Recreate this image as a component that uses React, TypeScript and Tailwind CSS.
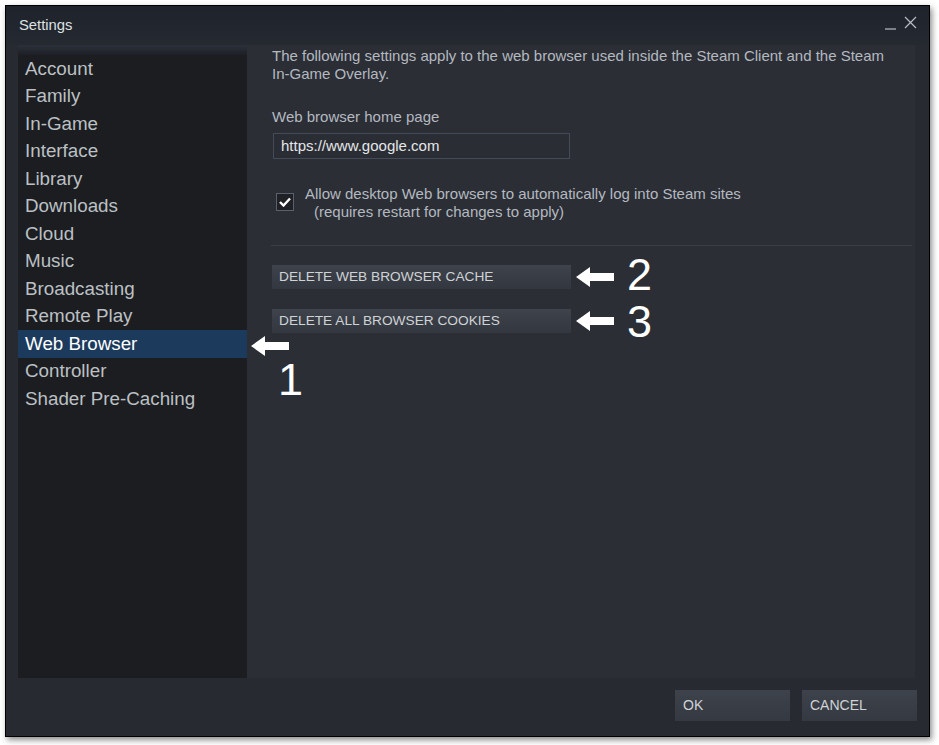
import React from 'react';

const NAV = [
  'Account', 'Family', 'In-Game', 'Interface', 'Library', 'Downloads', 'Cloud',
  'Music', 'Broadcasting', 'Remote Play', 'Web Browser', 'Controller', 'Shader Pre-Caching',
];

const Arrow: React.FC<{ className: string }> = ({ className }) => (
  <svg className={className} width="38" height="20" viewBox="0 0 38 20">
    <polygon points="0,10 14,0 14,6 38,6 38,14 14,14 14,20" fill="white" />
  </svg>
);

const App: React.FC = () => {
  return (
    <div className="w-[939px] h-[745px] bg-white pt-[5px] pl-[5px] relative" style={{ fontFamily: '"Liberation Sans", Arial, sans-serif' }}>
      {/* Window */}
      <div className="w-[925px] h-[732px] border border-black bg-[#272a31] shadow-[2px_3px_6px_rgba(0,0,0,0.45)] flex flex-col">
        {/* Title bar */}
        <div className="h-[39px] shrink-0 flex items-start justify-between bg-gradient-to-b from-[#1e232c] to-[#252930] pl-[13px] pr-[12px]">
          <span className="text-[14.8px] leading-[18px] text-[#dfe1e3] mt-[10px]">Settings</span>
          <div className="flex items-start gap-[8px] mt-[10px]">
            <svg width="11" height="14" viewBox="0 0 11 14"><line x1="0" y1="13" x2="11" y2="13" stroke="#b9bec4" strokeWidth="1.2" /></svg>
            <svg width="13" height="13" viewBox="0 0 13 13"><path d="M1 1 L12 12 M12 1 L1 12" stroke="#b9bec4" strokeWidth="1.2" /></svg>
          </div>
        </div>

        {/* Body */}
        <div className="flex h-[633px] shrink-0 pl-[12px] pr-[14px]">
          {/* Sidebar */}
          <div className="w-[229px] shrink-0 bg-[#1b1d21] flex flex-col">
            <div className="h-[10px] bg-gradient-to-b from-[#2c3038] to-[#1d2026]" />
            {NAV.map((item) => {
              const active = item === 'Web Browser';
              return (
                <div
                  key={item}
                  className={`h-[27.5px] flex items-center pl-[7px] text-[18.8px] ${active ? 'bg-[#1c3a5c] text-white' : 'text-[#bcc0c4]'}`}
                >
                  {item}
                </div>
              );
            })}
          </div>

          {/* Content */}
          <div className="flex-1 bg-[#2b2e35] pl-[25px] pr-[3px] pt-[2px] text-[15px] leading-[18px] text-[#b4b9c0]">
            <p className="w-[630px]">
              The following settings apply to the web browser used inside the Steam Client and the Steam In-Game Overlay.
            </p>
            <p className="mt-[25px]">Web browser home page</p>
            <div className="mt-[7px] ml-[1px] w-[297px] h-[26px] border border-[#444b58] bg-[#2a2d34] flex items-center pl-[7px] text-[#e4e6e8]">
              https://www.google.com
            </div>
            <div className="mt-[26px] flex items-start">
              <div className="mt-[8px] ml-[4px] w-[18px] h-[18px] border border-[#5b616c] bg-[#1f2126] flex items-center justify-center">
                <svg width="12" height="10" viewBox="0 0 12 10"><path d="M1 5 L4.5 8.5 L11 1.5" stroke="white" strokeWidth="2.4" fill="none" /></svg>
              </div>
              <div className="ml-[11px]">
                <p>Allow desktop Web browsers to automatically log into Steam sites</p>
                <p className="pl-[9px]">(requires restart for changes to apply)</p>
              </div>
            </div>
            <div className="mt-[24px] -ml-[1px] h-px bg-[#3a3e46]" />
            <div className="mt-[19px] flex flex-col gap-[20px]">
              <div className="w-[299px] h-[24px] bg-gradient-to-b from-[#3e434c] to-[#33373f] flex items-center pl-[7px] text-[13.7px] text-[#d0d3d6]">
                DELETE WEB BROWSER CACHE
              </div>
              <div className="w-[299px] h-[24px] bg-gradient-to-b from-[#3e434c] to-[#33373f] flex items-center pl-[7px] text-[13.7px] text-[#d0d3d6]">
                DELETE ALL BROWSER COOKIES
              </div>
            </div>
          </div>
        </div>

        {/* Footer */}
        <div className="flex-1 flex justify-end items-start gap-[12px] pt-[12px] pr-[12px]">
          <div className="w-[115px] h-[31px] bg-gradient-to-b from-[#3d424b] to-[#353941] flex items-center pl-[8px] text-[14px] text-[#d0d3d6]">OK</div>
          <div className="w-[115px] h-[31px] bg-gradient-to-b from-[#3d424b] to-[#353941] flex items-center pl-[8px] text-[14px] text-[#d0d3d6]">CANCEL</div>
        </div>
      </div>

      {/* Annotations */}
      <Arrow className="absolute left-[251px] top-[336px]" />
      <span className="absolute left-[278px] top-[357px] text-[45px] leading-[45px] text-white">1</span>
      <Arrow className="absolute left-[576px] top-[267px]" />
      <span className="absolute left-[627px] top-[252px] text-[45px] leading-[45px] text-white">2</span>
      <Arrow className="absolute left-[576px] top-[311px]" />
      <span className="absolute left-[627px] top-[299px] text-[45px] leading-[45px] text-white">3</span>
    </div>
  );
};

export default App;
